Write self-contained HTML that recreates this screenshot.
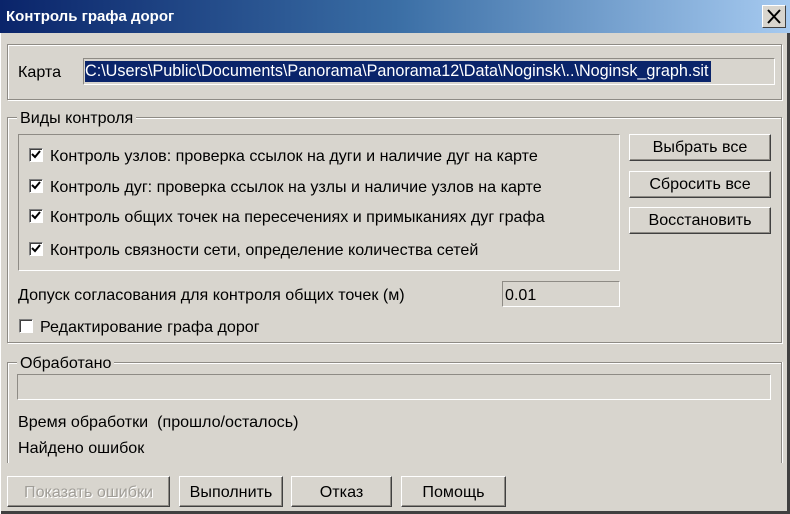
<!DOCTYPE html>
<html><head><meta charset="utf-8"><style>
*{margin:0;padding:0;box-sizing:border-box}
body{width:790px;height:514px;background:#d8d5ce;font-family:"Liberation Sans","DejaVu Sans",sans-serif;font-size:16.1px;color:#000;position:relative;overflow:hidden}
.a{position:absolute;white-space:nowrap}
.title{left:0;top:0;width:790px;height:33px;background:linear-gradient(90deg,#0a246a 0%,#3a6ea5 50%,#a6caf0 100%)}
.tt{left:6px;top:8px;color:#fff;font-weight:bold;font-size:15px}
.close{left:762px;top:5px;width:24px;height:23px;background:#d8d5ce;border:1px solid;border-color:#fff #404040 #404040 #fff}
.grp{border:1px solid #8e8b85;box-shadow:1px 1px 0 #fff inset,1px 1px 0 #fff}
.sunk{border:1px solid;border-color:#8e8b85 #fff #fff #8e8b85}
.btn{background:#d8d5ce;border:1px solid;border-color:#fff #404040 #404040 #fff;box-shadow:inset -1px -1px 0 #8e8b85;text-align:center;line-height:25px}
.leg{background:#d8d5ce;padding:0 3px}
.cb{width:14px;height:14px;background:#fff;border:1px solid;border-color:#808080 #fff #fff #808080;box-shadow:inset 1px 1px 0 #404040}
.cb svg{position:absolute;left:1px;top:1px}
</style></head><body>
<div class="a title"></div>
<div class="a tt">Контроль графа дорог</div>
<div class="a close"><svg width="22" height="21"><path d="M5 4L17 17M17 4L5 17" stroke="#000" stroke-width="2"/></svg></div>

<div class="a grp" style="left:7px;top:44px;width:775px;height:56px"></div>
<div class="a" style="left:18px;top:63px">Карта</div>
<div class="a sunk" style="left:83px;top:58px;width:692px;height:27px"></div>
<div class="a" style="left:85px;top:61px;height:21px;background:#0a246a;color:#fff;line-height:21px;padding-right:2px;font-size:16.2px">C:\Users\Public\Documents\Panorama\Panorama12\Data\Noginsk\..\Noginsk_graph.sit</div>

<div class="a grp" style="left:7px;top:117px;width:775px;height:226px"></div>
<div class="a leg" style="left:17px;top:109px">Виды контроля</div>
<div class="a sunk" style="left:18px;top:134px;width:602px;height:137px"></div>

<div class="a cb" style="left:29px;top:148px"><svg width="10" height="10"><path d="M1 4L4 7L9 1" stroke="#000" stroke-width="2" fill="none"/></svg></div>
<div class="a" style="left:50px;top:147px">Контроль узлов: проверка ссылок на дуги и наличие дуг на карте</div>
<div class="a cb" style="left:29px;top:179px"><svg width="10" height="10"><path d="M1 4L4 7L9 1" stroke="#000" stroke-width="2" fill="none"/></svg></div>
<div class="a" style="left:50px;top:178px">Контроль дуг: проверка ссылок на узлы и наличие узлов на карте</div>
<div class="a cb" style="left:29px;top:209px"><svg width="10" height="10"><path d="M1 4L4 7L9 1" stroke="#000" stroke-width="2" fill="none"/></svg></div>
<div class="a" style="left:50px;top:208px">Контроль общих точек на пересечениях и примыканиях дуг графа</div>
<div class="a cb" style="left:29px;top:242px"><svg width="10" height="10"><path d="M1 4L4 7L9 1" stroke="#000" stroke-width="2" fill="none"/></svg></div>
<div class="a" style="left:50px;top:241px">Контроль связности сети, определение количества сетей</div>

<div class="a btn" style="left:629px;top:134px;width:142px;height:27px">Выбрать все</div>
<div class="a btn" style="left:629px;top:171px;width:142px;height:27px">Сбросить все</div>
<div class="a btn" style="left:629px;top:207px;width:142px;height:27px">Восстановить</div>

<div class="a" style="left:18px;top:286px">Допуск согласования для контроля общих точек (м)</div>
<div class="a sunk" style="left:502px;top:281px;width:118px;height:26px"></div>
<div class="a" style="left:505px;top:286px">0.01</div>

<div class="a cb" style="left:19px;top:319px"></div>
<div class="a" style="left:40px;top:318px">Редактирование графа дорог</div>

<div class="a" style="left:7px;top:362px;width:775px;height:101px;border:1px solid #8e8b85;border-bottom:none;box-shadow:1px 1px 0 #fff inset,1px 0 0 #fff"></div>
<div class="a leg" style="left:17px;top:354px">Обработано</div>
<div class="a sunk" style="left:17px;top:374px;width:754px;height:26px"></div>
<div class="a" style="left:18px;top:413px">Время обработки&nbsp; (прошло/осталось)</div>
<div class="a" style="left:18px;top:439px">Найдено ошибок</div>

<div class="a btn" style="left:7px;top:476px;width:163px;height:31px;line-height:30px;color:#a19e98;text-shadow:1px 1px 0 #fff">Показать ошибки</div>
<div class="a btn" style="left:179px;top:476px;width:104px;height:31px;line-height:30px">Выполнить</div>
<div class="a btn" style="left:291px;top:476px;width:101px;height:31px;line-height:30px">Отказ</div>
<div class="a btn" style="left:401px;top:476px;width:105px;height:31px;line-height:30px">Помощь</div>

<div class="a" style="left:0;top:511px;width:790px;height:3px;background:#404040"></div>
<div class="a" style="left:787px;top:33px;width:3px;height:481px;background:#404040"></div>
<div class="a" style="left:0;top:33px;width:1px;height:481px;background:#fff"></div>
</body></html>
